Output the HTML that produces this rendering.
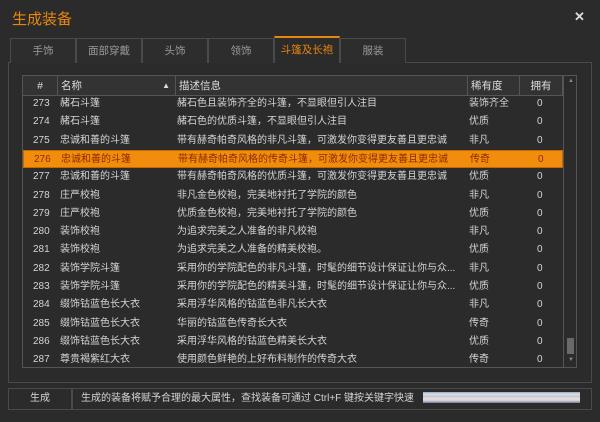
<!DOCTYPE html>
<html><head><meta charset="utf-8"><style>
*{margin:0;padding:0;box-sizing:border-box}
body{width:600px;height:422px;background:#2b2b2b;font-family:"Liberation Sans","Noto Sans CJK SC",sans-serif;font-size:10px;color:#d4d4d4;position:relative;overflow:hidden}
.title{position:absolute;left:12px;top:8px;font-size:15px;color:#e8870c}
.close{position:absolute;left:574px;top:9px;font-size:13px;color:#ddd;font-weight:bold}
.tab{position:absolute;top:38px;height:25px;border:1px solid #4a4a4a;border-bottom:none;color:#9a9a9a;text-align:center;line-height:24px;background:#2d2d2d;font-size:10.5px}
.tab.on{top:36px;height:27px;border-top:2px solid #e8870c;color:#e8870c;background:#2b2b2b;z-index:2}
.panel{position:absolute;left:8px;top:62px;width:584px;height:321px;border:1px solid #4a4a4a}
.table{position:absolute;left:22px;top:75px;width:555px;height:293px;border:1px solid #555;overflow:hidden;background:#2b2b2b}
.hdr{position:absolute;left:0;top:0;height:20px;width:540px;background:#333;border-bottom:1px solid #555}
.hc{position:absolute;top:0;height:20px;line-height:20px;border-right:1px solid #555;padding-left:3px;color:#ddd;font-size:10.5px}
.row{position:absolute;left:0;width:540px;height:18.3px;line-height:18px}
.row span{position:absolute;top:0;white-space:nowrap;overflow:hidden}
.row.sel{background:#f28c0c;color:#8a2c00;border:1px solid #c06a00}
.sb{position:absolute;left:540px;top:0;width:14px;height:291px;border-left:1px solid #555;background:#2b2b2b}
.btn{position:absolute;left:8px;top:388px;width:64px;height:22px;border:1px solid #4a4a4a;text-align:center;line-height:20px}
.msg{position:absolute;left:72px;top:388px;width:520px;height:22px;border:1px solid #4a4a4a;line-height:20px;padding-left:8px}
</style></head><body>
<div class="title">生成装备</div>
<div class="close">✕</div>
<div class="panel"></div>
<div class="tab" style="left:10px;width:66px">手饰</div>
<div class="tab" style="left:76px;width:66px">面部穿戴</div>
<div class="tab" style="left:142px;width:66px">头饰</div>
<div class="tab" style="left:208px;width:66px">领饰</div>
<div class="tab on" style="left:274px;width:66px">斗篷及长袍</div>
<div class="tab" style="left:340px;width:66px">服装</div>
<div class="table">
<div class="hdr">
<div class="hc" style="left:0;width:35px;text-align:center;padding:0">#</div>
<div class="hc" style="left:35px;width:118px">名称<span style="position:absolute;right:5px;font-size:8px">▲</span></div>
<div class="hc" style="left:153px;width:292px">描述信息</div>
<div class="hc" style="left:445px;width:52px">稀有度</div>
<div class="hc" style="left:497px;width:43px;text-align:center;padding:0">拥有</div>
</div>
<div id="rows"></div>
<div class="sb"><div style="position:absolute;left:4px;top:2px;font-size:6px;color:#888">▲</div><div style="position:absolute;left:3px;top:262px;width:7px;height:16px;background:#6a6a6a"></div><div style="position:absolute;left:4px;top:281px;font-size:6px;color:#888">▼</div></div>
</div>
<div class="btn">生成</div>
<div class="msg">生成的装备将赋予合理的最大属性，查找装备可通过 Ctrl+F 键按关键字快速</div>
<div style="position:absolute;left:423px;top:392px;width:157px;height:11px;background:linear-gradient(#9ab 0,#dde 20%,#bcc 40%,#edd 60%,#ccd 80%,#778 100%)"></div>
<script>
var d=[["273","赭石斗篷","赭石色且装饰齐全的斗篷，不显眼但引人注目","装饰齐全"],
["274","赭石斗篷","赭石色的优质斗篷，不显眼但引人注目","优质"],
["275","忠诚和善的斗篷","带有赫奇帕奇风格的非凡斗篷，可激发你变得更友善且更忠诚","非凡"],
["276","忠诚和善的斗篷","带有赫奇帕奇风格的传奇斗篷，可激发你变得更友善且更忠诚","传奇"],
["277","忠诚和善的斗篷","带有赫奇帕奇风格的优质斗篷，可激发你变得更友善且更忠诚","优质"],
["278","庄严校袍","非凡金色校袍，完美地衬托了学院的颜色","非凡"],
["279","庄严校袍","优质金色校袍，完美地衬托了学院的颜色","优质"],
["280","装饰校袍","为追求完美之人准备的非凡校袍","非凡"],
["281","装饰校袍","为追求完美之人准备的精美校袍。","优质"],
["282","装饰学院斗篷","采用你的学院配色的非凡斗篷，时髦的细节设计保证让你与众...","非凡"],
["283","装饰学院斗篷","采用你的学院配色的精美斗篷，时髦的细节设计保证让你与众...","优质"],
["284","缀饰钴蓝色长大衣","采用浮华风格的钴蓝色非凡长大衣","非凡"],
["285","缀饰钴蓝色长大衣","华丽的钴蓝色传奇长大衣","传奇"],
["286","缀饰钴蓝色长大衣","采用浮华风格的钴蓝色精美长大衣","优质"],
["287","尊贵褐紫红大衣","使用颜色鲜艳的上好布料制作的传奇大衣","传奇"]];
var h="";d.forEach(function(r,i){h+='<div class="row'+(i==3?' sel':'')+'" style="top:'+(19+i*18.3)+'px"><span style="left:10px">'+r[0]+'</span><span style="left:37px;width:114px">'+r[1]+'</span><span style="left:154px;width:289px">'+r[2]+'</span><span style="left:446px">'+r[3]+'</span><span style="left:514px">0</span></div>'});
document.getElementById("rows").innerHTML=h;
</script>
</body></html>
